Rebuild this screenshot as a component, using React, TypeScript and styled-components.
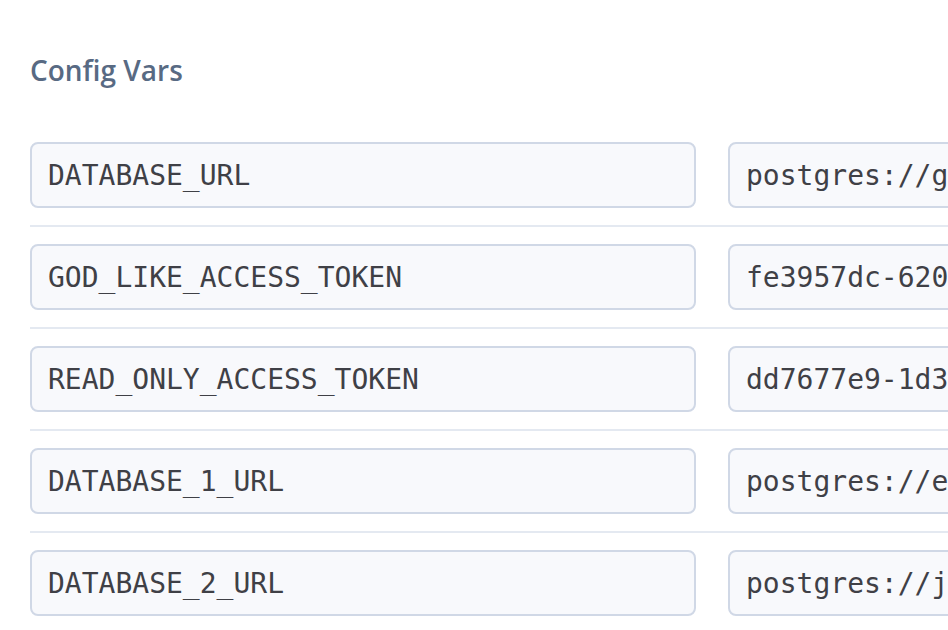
import React from "react";
import styled, { createGlobalStyle } from "styled-components";

const GlobalStyle = createGlobalStyle`
  html, body {
    margin: 0;
    padding: 0;
    background: #ffffff;
  }
`;

const Page = styled.div`
  box-sizing: border-box;
  width: 100vw;
  height: 100vh;
  overflow: hidden;
  padding: 48px 0 0 30px;
`;

const Title = styled.h2`
  margin: 0 0 50px 0;
  font-family: "Open Sans", "Liberation Sans", sans-serif;
  font-weight: 600;
  font-size: 28px;
  line-height: 44px;
  color: #586a83;
`;

const VarList = styled.div`
  display: flex;
  flex-direction: column;
  width: 1364px;
`;

const VarRow = styled.div<{ $last?: boolean }>`
  display: grid;
  grid-template-columns: 666px 666px;
  column-gap: 32px;
  padding-bottom: ${(p) => (p.$last ? "0" : "17px")};
  margin-bottom: ${(p) => (p.$last ? "0" : "17px")};
  border-bottom: ${(p) => (p.$last ? "none" : "2px solid #e4e9f1")};
`;

const VarInput = styled.input`
  box-sizing: border-box;
  height: 66px;
  width: 100%;
  padding: 10px 16px;
  border: 2px solid #d0d8e6;
  border-radius: 8px;
  background: #f8f9fc;
  font-family: "DejaVu Sans Mono", "Liberation Mono", monospace;
  font-size: 28px;
  line-height: 42px;
  color: #3f4046;
  outline: none;
`;

const vars = [
  { key: "DATABASE_URL", value: "postgres://gxkmpqlwdhzrvt:8f2c1e9a@ec2-54-83-1-94.compute-1.amazonaws.com" },
  { key: "GOD_LIKE_ACCESS_TOKEN", value: "fe3957dc-6209-4b1e-9c3a-71d2f0a8e5b4" },
  { key: "READ_ONLY_ACCESS_TOKEN", value: "dd7677e9-1d3c-42af-8e0b-5c6f9a2d7e31" },
  { key: "DATABASE_1_URL", value: "postgres://ewqjzrnbtkhylx:3d9b7a2f@ec2-23-21-4-7.compute-1.amazonaws.com" },
  { key: "DATABASE_2_URL", value: "postgres://jhqprtvmzsnkbw:c41e8f6d@ec2-50-19-2-11.compute-1.amazonaws.com" },
];

export default function App() {
  return (
    <>
      <GlobalStyle />
      <Page>
        <Title>Config Vars</Title>
        <VarList>
          {vars.map((v, i) => (
            <VarRow key={v.key} $last={i === vars.length - 1}>
              <VarInput readOnly value={v.key} />
              <VarInput readOnly value={v.value} />
            </VarRow>
          ))}
        </VarList>
      </Page>
    </>
  );
}
